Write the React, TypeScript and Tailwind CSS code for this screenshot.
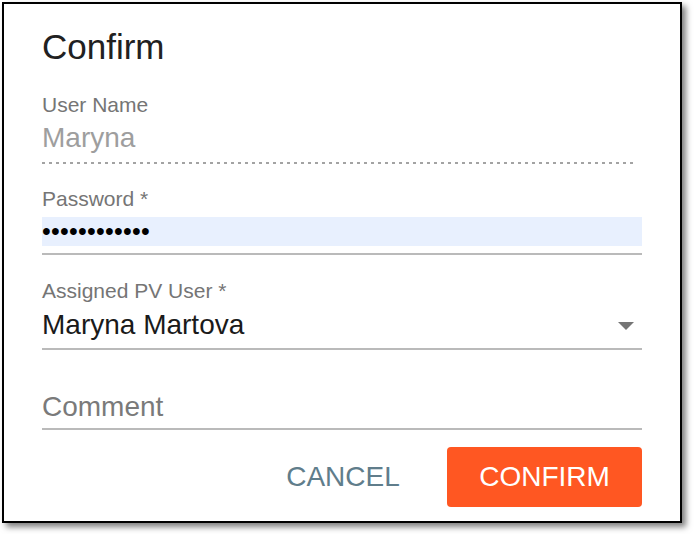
import React from "react";

export default function App() {
  const font = { fontFamily: '"Liberation Sans", Arial, Helvetica, sans-serif' };
  return (
    <div className="w-[694px] h-[534px] bg-white pl-[2px] pt-[2px]" style={font}>
      <div className="w-[680px] h-[521px] border-2 border-black bg-white shadow-[4px_4px_6px_rgba(0,0,0,0.5)] px-[38px] pt-[25px] flex flex-col">
        <h1 className="text-[35px] leading-none h-[35px] text-[#212121] font-normal">Confirm</h1>

        <div className="mt-[30px] text-[21px] leading-none h-[21px] text-[#757575]">User Name</div>
        <div className="mt-[9px] text-[28px] leading-none h-[28px] text-[#9e9e9e]">Maryna</div>
        <div className="mt-[10px] h-[2px] w-[594px] bg-[linear-gradient(to_right,#a3a3a3_45%,transparent_45%)] bg-[length:7px_2px] bg-repeat-x"></div>

        <div className="mt-[24px] text-[21px] leading-none h-[21px] text-[#757575]">Password *</div>
        <div className="mt-[8px] h-[29px] bg-[#e8f0fe] flex items-center">
          <span className="text-[25px] leading-none tracking-[0.25px] text-black">••••••••••••</span>
        </div>
        <div className="mt-[7px] h-[2px] bg-[#bababa]"></div>

        <div className="mt-[25px] text-[21px] leading-none h-[21px] text-[#757575]">Assigned PV User *</div>
        <div className="mt-[10px] h-[28px] flex justify-between">
          <span className="text-[28px] leading-none text-[#1a1a1a]">Maryna Martova</span>
          <svg className="mt-[11px] mr-[8px]" width="16" height="8" viewBox="0 0 16 8">
            <path d="M0 0 L16 0 L8 8 Z" fill="#757575" />
          </svg>
        </div>
        <div className="mt-[9px] h-[2px] bg-[#bababa]"></div>

        <div className="mt-[43px] text-[28px] leading-none h-[28px] text-[#7a7a7a]">Comment</div>
        <div className="mt-[7px] h-[2px] bg-[#bababa]"></div>

        <div className="mt-[17px] flex justify-end gap-[29px]">
          <button className="w-[150px] h-[60px] text-[28px] leading-none text-[#607d8b] bg-transparent">CANCEL</button>
          <button className="w-[195px] h-[60px] rounded-[4px] bg-[#ff5722] text-white text-[28px] leading-none">CONFIRM</button>
        </div>
      </div>
    </div>
  );
}
